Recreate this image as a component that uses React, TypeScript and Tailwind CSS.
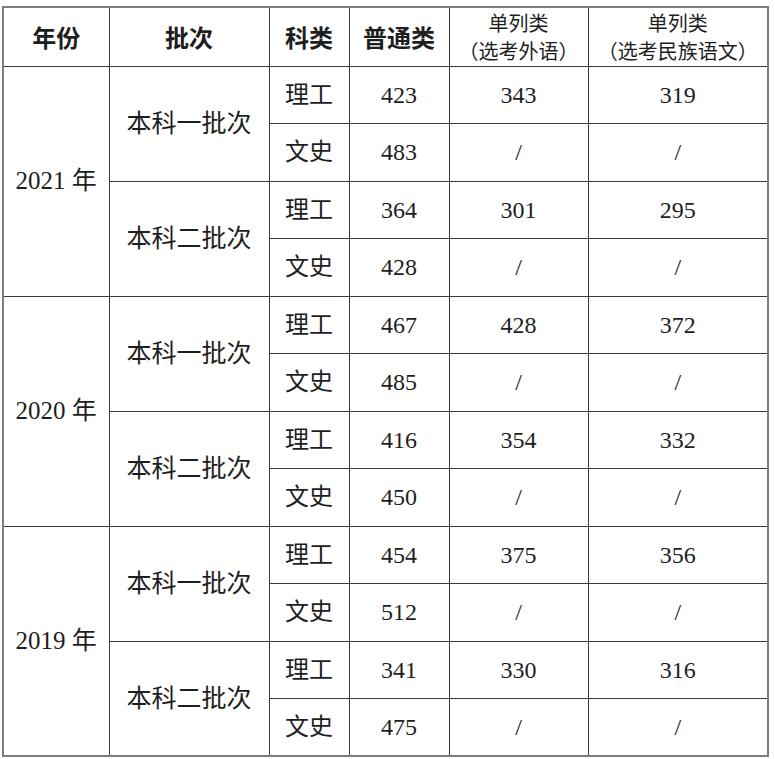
const rows = [
  {
    year: '2021 年',
    batches: [
      { name: '本科一批次', items: [['理工', '423', '343', '319'], ['文史', '483', '/', '/']] },
      { name: '本科二批次', items: [['理工', '364', '301', '295'], ['文史', '428', '/', '/']] },
    ],
  },
  {
    year: '2020 年',
    batches: [
      { name: '本科一批次', items: [['理工', '467', '428', '372'], ['文史', '485', '/', '/']] },
      { name: '本科二批次', items: [['理工', '416', '354', '332'], ['文史', '450', '/', '/']] },
    ],
  },
  {
    year: '2019 年',
    batches: [
      { name: '本科一批次', items: [['理工', '454', '375', '356'], ['文史', '512', '/', '/']] },
      { name: '本科二批次', items: [['理工', '341', '330', '316'], ['文史', '475', '/', '/']] },
    ],
  },
]

const cell = 'border-[1.5px] border-[#3a3a3a] text-center align-middle p-0'

export default function App() {
  return (
    <div className="min-h-screen w-[775px] bg-white pl-[2px] pt-[6px]">
      <table className="w-[765px] table-fixed border-collapse border-2 border-[#7d7d7d] text-[#1e1e1e]">
        <colgroup>
          <col className="w-[106px]" />
          <col className="w-[160px]" />
          <col className="w-[80px]" />
          <col className="w-[100px]" />
          <col className="w-[139px]" />
          <col className="w-[180px]" />
        </colgroup>
        <thead>
          <tr className="h-[59px] font-['Noto_Sans_CJK_SC',sans-serif]">
            <th className={`${cell} text-[24px] font-bold`}>年份</th>
            <th className={`${cell} text-[24px] font-bold`}>批次</th>
            <th className={`${cell} text-[24px] font-bold`}>科类</th>
            <th className={`${cell} text-[24px] font-bold`}>普通类</th>
            <th className={`${cell} text-[20px] font-normal leading-[28px]`}>
              <div>单列类</div>
              <div>（选考外语）</div>
            </th>
            <th className={`${cell} text-[20px] font-normal leading-[28px]`}>
              <div>单列类</div>
              <div>（选考民族语文）</div>
            </th>
          </tr>
        </thead>
        <tbody className="font-['Liberation_Serif','Noto_Sans_CJK_SC',serif]">
          {rows.map((y) =>
            y.batches.map((b, bi) =>
              b.items.map((it, ii) => (
                <tr key={`${y.year}-${bi}-${ii}`} className="h-[57.5px]">
                  {bi === 0 && ii === 0 && (
                    <td rowSpan={4} className={`${cell} text-[25px]`}>
                      {y.year}
                    </td>
                  )}
                  {ii === 0 && (
                    <td rowSpan={2} className={`${cell} text-[25px]`}>
                      {b.name}
                    </td>
                  )}
                  <td className={`${cell} text-[24px]`}>{it[0]}</td>
                  <td className={`${cell} text-[24px]`}>{it[1]}</td>
                  <td className={`${cell} text-[24px]`}>{it[2]}</td>
                  <td className={`${cell} text-[24px]`}>{it[3]}</td>
                </tr>
              ))
            )
          )}
        </tbody>
      </table>
    </div>
  )
}
